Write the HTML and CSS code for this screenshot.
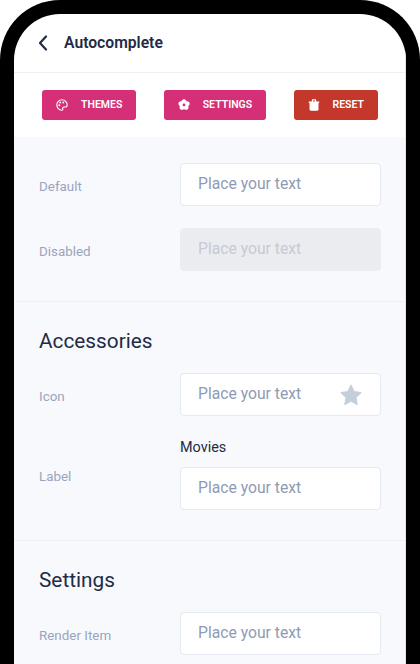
FILE: index.html
```html
<!DOCTYPE html>
<html lang="en">
<head>
    <meta charset="UTF-8">
    <meta name="viewport" content="width=device-width, initial-scale=1.0">
    <title>Autocomplete</title>
    <link rel="stylesheet" href="styles.css">
</head>
<body>
    <div class="phone">
        <div class="screen">
            <div class="header">
                <svg class="back-icon" width="10" height="16" viewBox="0 0 10 16">
                    <path d="M8 1.5 L2 8 L8 14.5" fill="none" stroke="#222b45" stroke-width="2.2" stroke-linecap="round" stroke-linejoin="round"/>
                </svg>
                <span class="title">Autocomplete</span>
            </div>
            <div class="toolbar">
                <a class="btn btn-pink" href="#themes">
                    <svg width="12" height="12" viewBox="0 0 12 12">
                        <path d="M6 .8 C3 .8 .8 3 .8 6 C.8 8.9 3.1 11.2 5.6 11.2 C6.7 11.2 7.1 10.4 6.8 9.7 C6.4 8.8 6.9 8 7.9 8 L9.5 8 C10.5 8 11.2 7.2 11.2 6 C11.2 3.1 8.9 .8 6 .8 Z" fill="none" stroke="#fff" stroke-width="1.1"/>
                        <circle cx="3.3" cy="6.2" r="1" fill="#fff"/>
                        <circle cx="4.3" cy="3.6" r="1" fill="#fff"/>
                        <circle cx="7.3" cy="3.4" r="1" fill="#fff"/>
                    </svg>
                    THEMES
                </a>
                <a class="btn btn-pink" href="#settings">
                    <svg width="12" height="12" viewBox="0 0 12 12">
                        <path fill-rule="evenodd" fill="#fff" d="M6 .2 C7.5 .2 8.4 1.2 8.4 2.4 C9.7 2.1 11.1 2.8 11.6 4.1 C12 5.4 11.3 6.6 10.2 7 C10.9 8.1 10.7 9.6 9.6 10.4 C8.5 11.2 7 10.9 6 9.9 C5.1 10.9 3.6 11.2 2.5 10.4 C1.4 9.6 1.2 8.1 1.9 7 C.8 6.6 .1 5.4 .5 4.1 C.9 2.8 2.3 2.1 3.6 2.4 C3.6 1.2 4.5 .2 6 .2 Z M6 4.5 A1.4 1.4 0 1 0 6 7.3 A1.4 1.4 0 1 0 6 4.5 Z"/>
                    </svg>
                    SETTINGS
                </a>
                <a class="btn btn-red" href="#reset">
                    <svg width="12" height="12" viewBox="0 0 11 12">
                        <path fill="#fff" d="M.3 2.6 H3.3 V1.5 C3.3 .8 3.8 .3 4.5 .3 H6.5 C7.2 .3 7.7 .8 7.7 1.5 V2.6 H10.7 V3.9 H10 V10.3 C10 11.1 9.4 11.7 8.6 11.7 H2.4 C1.6 11.7 1 11.1 1 10.3 V3.9 H.3 Z M4.5 1.5 V2.6 H6.5 V1.5 Z"/>
                    </svg>
                    RESET
                </a>
            </div>
            <div class="content">
                <div class="section">
                    <div class="row">
                        <span class="row-label">Default</span>
                        <div class="field"><span class="placeholder">Place your text</span></div>
                    </div>
                    <div class="row">
                        <span class="row-label">Disabled</span>
                        <div class="field field-disabled"><span class="placeholder">Place your text</span></div>
                    </div>
                </div>
                <div class="section">
                    <h2 class="section-title">Accessories</h2>
                    <div class="row">
                        <span class="row-label">Icon</span>
                        <div class="field">
                            <span class="placeholder">Place your text</span>
                            <svg class="star-icon" width="24" height="24" viewBox="0 0 24 24">
                                <path d="M12 2.2 L15 8.6 L22 9.6 L16.9 14.4 L18.1 21.4 L12 18 L5.9 21.4 L7.1 14.4 L2 9.6 L9 8.6 Z" fill="#c5cedb" stroke="#c5cedb" stroke-width="1.2" stroke-linejoin="round"/>
                            </svg>
                        </div>
                    </div>
                    <div class="row row-labelled">
                        <span class="row-label">Label</span>
                        <div class="field-wrap">
                            <div class="field-caption">Movies</div>
                            <div class="field"><span class="placeholder">Place your text</span></div>
                        </div>
                    </div>
                </div>
                <div class="section">
                    <h2 class="section-title">Settings</h2>
                    <div class="row">
                        <span class="row-label">Render Item</span>
                        <div class="field"><span class="placeholder">Place your text</span></div>
                    </div>
                </div>
            </div>
        </div>
    </div>
</body>
</html>
```

FILE: styles.css
```css
body {
    margin: 0;
    padding: 0;
    background-color: #ffffff;
    font-family: 'Roboto', 'Liberation Sans', sans-serif;
    color: #222b45;
}
.phone {
    width: 420px;
    height: 664px;
    box-sizing: border-box;
    background-color: #ffffff;
    border: 14px solid #000000;
    border-bottom: 0;
    border-radius: 60px 60px 0 0;
    overflow: hidden;
}
.screen {
    height: 100%;
    border-right: 1px solid #e4e6ea;
    display: flex;
    flex-direction: column;
}
.header {
    height: 59px;
    box-sizing: border-box;
    border-bottom: 1px solid #edf1f7;
    padding: 0 0 1px 24px;
    display: flex;
    align-items: center;
    flex-shrink: 0;
}
.back-icon {
    margin-right: 16px;
}
.title {
    font-size: 15.7px;
    font-weight: 600;
}
.toolbar {
    height: 64px;
    box-sizing: border-box;
    padding: 17px 27px 0 28px;
    display: flex;
    justify-content: space-between;
    align-items: flex-start;
    flex-shrink: 0;
}
.btn {
    height: 30px;
    box-sizing: border-box;
    padding: 0 14px 1px;
    display: flex;
    align-items: center;
    gap: 13px;
    border-radius: 3px;
    color: #ffffff;
    text-decoration: none;
    font-size: 10.5px;
    font-weight: 600;
}
.btn-pink {
    background-color: #d42f77;
}
.btn-red {
    background-color: #c4382c;
}
.content {
    flex-grow: 1;
    background-color: #f7f9fc;
    overflow: hidden;
}
.section {
    padding: 26px 24px 30px 25px;
    border-bottom: 1px solid #edf1f7;
    display: flex;
    flex-direction: column;
    gap: 22px;
}
.section-title {
    margin: 2px 0 -2px;
    font-size: 20.8px;
    line-height: 23px;
    font-weight: 400;
}
.row {
    display: flex;
    align-items: center;
}
.row-label {
    width: 141px;
    flex-shrink: 0;
    padding-top: 3px;
    font-size: 13.4px;
    color: #9ba4bd;
}
.row-labelled .row-label {
    padding-top: 5px;
}
.field-wrap {
    width: 201px;
}
.field-caption {
    font-size: 14.4px;
    line-height: 20px;
    margin-bottom: 9px;
}
.field {
    width: 201px;
    height: 43px;
    box-sizing: border-box;
    padding: 0 17px 3px;
    background-color: #ffffff;
    border: 1px solid #e4e9f2;
    border-radius: 4px;
    display: flex;
    align-items: center;
    justify-content: space-between;
}
.field-disabled {
    background-color: #eaecf0;
    border-color: #eaecf0;
}
.placeholder {
    font-size: 15.7px;
    color: #8f9bb3;
}
.field-disabled .placeholder {
    color: #c5cad6;
}
.star-icon {
    margin-top: 3px;
}
```
